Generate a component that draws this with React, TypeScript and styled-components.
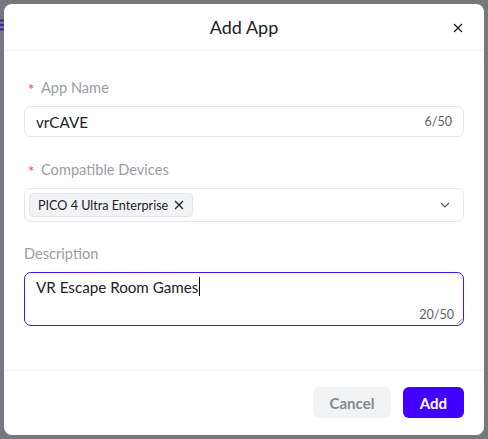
import React from "react";
import styled, { createGlobalStyle } from "styled-components";

const FONT = `"Lato", "Noto Sans", sans-serif`;

const Global = createGlobalStyle`
  html, body { margin: 0; padding: 0; }
  body {
    background: #76787d;
    font-family: ${FONT};
    width: 488px;
    height: 439px;
    overflow: hidden;
  }
  * { box-sizing: border-box; }
`;

const Page = styled.div`
  display: flex;
  align-items: flex-start;
  padding-top: 4px;
  height: 439px;
`;

const BehindStrip = styled.div`
  width: 4px;
  overflow: hidden;
  padding-top: 11px;
  flex-shrink: 0;
`;

const Modal = styled.div`
  width: 480px;
  height: 431px;
  background: #fff;
  border-radius: 8px;
  display: flex;
  flex-direction: column;
`;

const Header = styled.div`
  height: 47px;
  border-bottom: 1px solid #f0f1f3;
  display: flex;
  align-items: center;
  justify-content: center;
  position: relative;
`;

const Title = styled.div`
  font-size: 18px;
  color: #1d2129;
  margin-top: -1px;
`;

const Close = styled.button`
  position: absolute;
  right: 20px;
  top: 18px;
  width: 12px;
  height: 12px;
  padding: 0;
  border: none;
  background: none;
  display: flex;
  align-items: center;
  justify-content: center;
`;

const Body = styled.div`
  flex: 1;
  padding: 24px 20px 0;
  display: flex;
  flex-direction: column;
`;

const Field = styled.div<{ $gap: number }>`
  display: flex;
  flex-direction: column;
  gap: 9px;
  margin-bottom: ${(p) => p.$gap}px;
`;

const Label = styled.div`
  height: 22px;
  padding-top: 2px;
  font-size: 14.6px;
  color: #9a9da3;
  display: flex;
  align-items: center;
`;

const Star = styled.span`
  color: #f53f3f;
  font-size: 15px;
  width: 17px;
  padding-left: 4px;
  margin-top: 3px;
`;

const InputBox = styled.div<{ $h: number; $focus?: boolean; $align?: string; $padL?: number }>`
  height: ${(p) => p.$h}px;
  border: 1px solid ${(p) => (p.$focus ? "#4a10f5" : "#e5e6eb")};
  border-radius: 7px;
  display: flex;
  align-items: ${(p) => p.$align || "center"};
  position: relative;
  padding: 0 11px 0 ${(p) => p.$padL ?? 11}px;
`;

const Value = styled.div<{ $top?: number }>`
  flex: 1;
  font-size: 15.2px;
  color: #1d2129;
  display: flex;
  align-items: center;
  margin-top: ${(p) => p.$top ?? 0}px;
`;

const Counter = styled.div`
  font-size: 12.5px;
  color: #5c6066;
`;

const TextAreaCounter = styled(Counter)`
  position: absolute;
  right: 9px;
  bottom: 3px;
`;

const Caret = styled.span`
  display: inline-block;
  width: 1px;
  height: 19px;
  background: #000;
  margin-left: 1px;
`;

const Resize = styled.svg`
  position: absolute;
  right: 1px;
  bottom: 1px;
`;

const Tag = styled.div`
  height: 24px;
  margin-left: -8px;
  padding: 0 8px;
  background: #f2f3f5;
  border: 1px solid #e5e6eb;
  border-radius: 4px;
  display: flex;
  align-items: center;
  gap: 6px;
  font-size: 12.6px;
  color: #1d2129;
`;

const Spacer = styled.div`
  flex: 1;
`;

const Footer = styled.div`
  height: 65px;
  border-top: 1px solid #f0f1f3;
  display: flex;
  justify-content: flex-end;
  align-items: flex-start;
  gap: 12px;
  padding: 16px 20px 0;
`;

const Button = styled.button<{ $primary?: boolean }>`
  height: 31px;
  padding: 0 14px;
  border: none;
  border-radius: 6px;
  font-family: ${FONT};
  font-size: 15px;
  font-weight: 700;
  background: ${(p) => (p.$primary ? "#4200ff" : "#f2f3f5")};
  color: ${(p) => (p.$primary ? "#fff" : "#86898f")};
  min-width: ${(p) => (p.$primary ? 61 : 78)}px;
`;

const X = ({ size, color }: { size: number; color: string }) => (
  <svg width={size} height={size} viewBox="0 0 10 10">
    <path d="M1 1L9 9M9 1L1 9" stroke={color} strokeWidth="1.3" fill="none" />
  </svg>
);

export default function App() {
  return (
    <>
      <Global />
      <Page>
        <BehindStrip>
          <svg width="8" height="12" viewBox="0 0 8 12">
            <path d="M0 1.5H8M0 6H8M0 10.5H8" stroke="#3a2a9e" strokeWidth="2" />
          </svg>
        </BehindStrip>
        <Modal>
          <Header>
            <Title>Add App</Title>
            <Close aria-label="close">
              <X size={10} color="#1d2129" />
            </Close>
          </Header>
          <Body>
            <Field $gap={20}>
              <Label>
                <Star>*</Star>App Name
              </Label>
              <InputBox $h={31}>
                <Value>vrCAVE</Value>
                <Counter>6/50</Counter>
              </InputBox>
            </Field>
            <Field $gap={19}>
              <Label>
                <Star>*</Star>Compatible Devices
              </Label>
              <InputBox $h={34} $padL={12}>
                <Tag>
                  PICO 4 Ultra Enterprise
                  <X size={10} color="#1d2129" />
                </Tag>
                <Spacer />
                <svg width="10" height="6" viewBox="0 0 10 6" style={{ marginRight: 2 }}>
                  <path d="M1 1L5 5L9 1" stroke="#4e5969" strokeWidth="1.2" fill="none" />
                </svg>
              </InputBox>
            </Field>
            <Field $gap={0}>
              <Label>Description</Label>
              <InputBox $h={54} $focus $align="flex-start">
                <Value $top={4}>
                  VR Escape Room Games
                  <Caret />
                </Value>
                <TextAreaCounter>20/50</TextAreaCounter>
                <Resize width="6" height="6" viewBox="0 0 6 6">
                  <path d="M1 6L6 1M3.5 6L6 3.5" stroke="#888" strokeWidth="0.8" />
                </Resize>
              </InputBox>
            </Field>
          </Body>
          <Footer>
            <Button>Cancel</Button>
            <Button $primary>Add</Button>
          </Footer>
        </Modal>
      </Page>
    </>
  );
}
